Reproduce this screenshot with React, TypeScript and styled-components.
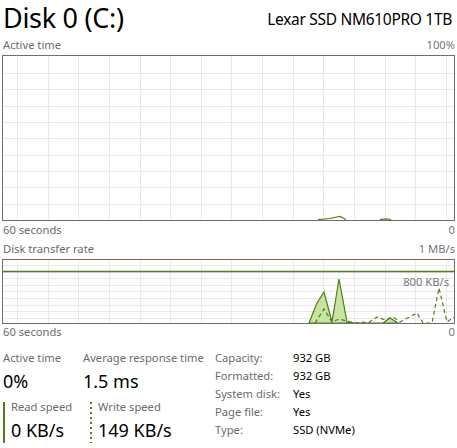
import React from "react";
import styled, { createGlobalStyle } from "styled-components";

const GlobalStyle = createGlobalStyle`
  html, body {
    margin: 0;
    padding: 0;
    background: #ffffff;
  }
  body {
    font-family: "Noto Sans", "Open Sans", sans-serif;
    color: #000000;
  }
`;

const GREEN = "#527c19";
const GRID = "#e8e8e8";

const Page = styled.div`
  width: 457px;
  height: 448px;
  box-sizing: border-box;
  padding: 0 2px;
  overflow: hidden;
`;

const Header = styled.div`
  display: flex;
  justify-content: space-between;
  align-items: flex-start;
  height: 37px;
  padding-left: 1px;
`;

const Title = styled.div`
  font-size: 27px;
  line-height: 35px;
  font-weight: 400;
  letter-spacing: -0.3px;
`;

const DeviceName = styled.div`
  margin-top: 9px;
  font-size: 15.5px;
  line-height: 21px;
  letter-spacing: -0.3px;
  padding-right: 3px;
`;

const ScaleRow = styled.div<{ $gap?: number; $top?: number }>`
  display: flex;
  justify-content: space-between;
  font-size: 11.2px;
  line-height: 16px;
  padding-left: 1px;
  margin-top: ${(p) => p.$top ?? 0}px;
  margin-bottom: ${(p) => p.$gap ?? 0}px;
  color: #6b6b6b;
`;

const ScaleValue = styled.span`
  color: #6e7780;
`;

const ChartBox = styled.div<{ $height: number }>`
  position: relative;
  height: ${(p) => p.$height}px;
  border: 1px solid #6e6e6e;
  box-sizing: border-box;
  svg {
    display: block;
  }
`;

const ChartNote = styled.span`
  position: absolute;
  right: 5px;
  top: 14px;
  font-size: 11.2px;
  line-height: 16px;
  color: #6e7780;
`;

const Stats = styled.div`
  display: flex;
  margin-top: 10px;
  padding-left: 1px;
`;

const LeftStats = styled.div`
  width: 212px;
`;

const StatRow = styled.div<{ $gap?: number }>`
  display: flex;
  margin-bottom: ${(p) => p.$gap ?? 0}px;
`;

const Stat = styled.div<{ $width?: number }>`
  width: ${(p) => (p.$width ? `${p.$width}px` : "auto")};
`;

const StatLabel = styled.div`
  font-size: 11.2px;
  line-height: 16px;
  color: #6b6b6b;
  margin-bottom: 3px;
`;

const StatValue = styled.div`
  font-size: 18px;
  line-height: 24px;
`;

const SpeedBlock = styled.div<{ $width?: number }>`
  display: flex;
  gap: 6px;
  width: ${(p) => (p.$width ? `${p.$width}px` : "auto")};
`;

const SpeedBar = styled.div<{ $dashed?: boolean }>`
  width: 2px;
  height: 41px;
  margin-top: 2px;
  background: ${(p) =>
    p.$dashed
      ? `repeating-linear-gradient(to bottom, ${GREEN} 0 2px, transparent 2px 5px)`
      : GREEN};
`;

const SpeedLabel = styled.div`
  font-size: 11.2px;
  line-height: 12px;
  color: #6b6b6b;
  margin-top: 1px;
  margin-bottom: 5px;
`;

const Props = styled.div`
  display: grid;
  grid-template-columns: 78px auto;
  grid-auto-rows: 18px;
  font-size: 11.2px;
  line-height: 16px;
`;

const PropName = styled.div`
  color: #6b6b6b;
`;

const PropValue = styled.div`
  color: #000000;
`;

const COL_START = 14;
const COL_STEP = 30.64;

function Grid({
  width,
  height,
  rowStart,
  rowStep,
  rows,
}: {
  width: number;
  height: number;
  rowStart: number;
  rowStep: number;
  rows: number;
}) {
  const cols: number[] = [];
  for (let x = COL_START; x < width; x += COL_STEP) cols.push(Math.round(x) + 0.5);
  const lines: number[] = [];
  for (let i = 0; i < rows; i++) lines.push(Math.round(rowStart + i * rowStep) + 0.5);
  return (
    <g stroke={GRID} strokeWidth={1}>
      {cols.map((x) => (
        <line key={`c${x}`} x1={x} y1={0} x2={x} y2={height} />
      ))}
      {lines.map((y) => (
        <line key={`r${y}`} x1={0} y1={y} x2={width} y2={y} />
      ))}
    </g>
  );
}

const pts = (list: number[][]) => list.map((p) => p.join(",")).join(" ");

const activeLine = [
  [315, 163.5],
  [327, 162.5],
  [337, 160.5],
  [343, 163.5],
];
const activeLine2 = [
  [377, 163.5],
  [383, 162.8],
  [388, 163.5],
];

const readArea = [
  [306, 63],
  [314, 43],
  [321, 32],
  [329, 62],
  [336, 19],
  [344, 62],
  [352, 63],
  [380, 63],
  [387, 58],
  [395, 63],
];

const writeLine = [
  [312, 63],
  [321, 49],
  [329, 62],
  [336, 59],
  [344, 61],
  [352, 63],
  [360, 62],
  [365, 63],
  [374, 57],
  [382, 60],
  [390, 57],
  [397, 62],
  [414, 53],
  [420, 63],
  [429, 63],
  [436, 28],
  [444, 62],
  [451, 57],
];

const INNER_W = 451;

export default function App() {
  return (
    <Page>
      <GlobalStyle />
      <Header>
        <Title>Disk 0 (C:)</Title>
        <DeviceName>Lexar SSD NM610PRO 1TB</DeviceName>
      </Header>

      <ScaleRow $gap={2}>
        <span>Active time</span>
        <ScaleValue>100%</ScaleValue>
      </ScaleRow>
      <ChartBox $height={166}>
        <svg width={INNER_W} height={164}>
          <Grid width={INNER_W} height={164} rowStart={16.7} rowStep={16.4} rows={9} />
          <polyline points={pts(activeLine)} fill="none" stroke={GREEN} strokeWidth={1.2} />
          <polyline points={pts(activeLine2)} fill="none" stroke={GREEN} strokeWidth={1.2} />
        </svg>
      </ChartBox>
      <ScaleRow $gap={3} $top={1}>
        <span>60 seconds</span>
        <ScaleValue>0</ScaleValue>
      </ScaleRow>

      <ScaleRow $gap={2}>
        <span>Disk transfer rate</span>
        <ScaleValue>1 MB/s</ScaleValue>
      </ScaleRow>
      <ChartBox $height={65}>
        <svg width={INNER_W} height={63}>
          <Grid width={INNER_W} height={63} rowStart={5} rowStep={6.6} rows={9} />
          <line x1={0} y1={11.5} x2={INNER_W} y2={11.5} stroke={GREEN} strokeWidth={1.3} />
          <polygon points={pts(readArea)} fill="#c6e5a0" stroke={GREEN} strokeWidth={1.2} />
          <polyline
            points={pts(writeLine)}
            fill="none"
            stroke={GREEN}
            strokeWidth={1.2}
            strokeDasharray="4 3"
          />
        </svg>
        <ChartNote>800 KB/s</ChartNote>
      </ChartBox>
      <ScaleRow>
        <span>60 seconds</span>
        <ScaleValue>0</ScaleValue>
      </ScaleRow>

      <Stats>
        <LeftStats>
          <StatRow $gap={7}>
            <Stat $width={80}>
              <StatLabel>Active time</StatLabel>
              <StatValue>0%</StatValue>
            </Stat>
            <Stat>
              <StatLabel>Average response time</StatLabel>
              <StatValue>1.5 ms</StatValue>
            </Stat>
          </StatRow>
          <StatRow>
            <SpeedBlock $width={87}>
              <SpeedBar />
              <div>
                <SpeedLabel>Read speed</SpeedLabel>
                <StatValue>0 KB/s</StatValue>
              </div>
            </SpeedBlock>
            <SpeedBlock>
              <SpeedBar $dashed />
              <div>
                <SpeedLabel>Write speed</SpeedLabel>
                <StatValue>149 KB/s</StatValue>
              </div>
            </SpeedBlock>
          </StatRow>
        </LeftStats>
        <Props>
          <PropName>Capacity:</PropName>
          <PropValue>932 GB</PropValue>
          <PropName>Formatted:</PropName>
          <PropValue>932 GB</PropValue>
          <PropName>System disk:</PropName>
          <PropValue>Yes</PropValue>
          <PropName>Page file:</PropName>
          <PropValue>Yes</PropValue>
          <PropName>Type:</PropName>
          <PropValue>SSD (NVMe)</PropValue>
        </Props>
      </Stats>
    </Page>
  );
}
